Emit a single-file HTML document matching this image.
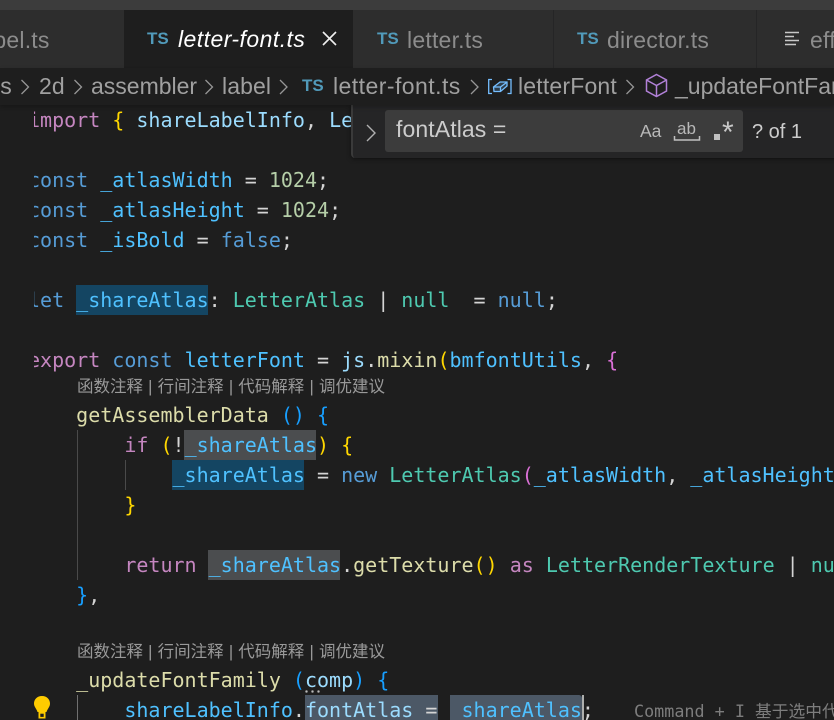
<!DOCTYPE html>
<html><head><meta charset="utf-8">
<style>
html,body{margin:0;padding:0;background:#1e1e1e;width:834px;height:720px;overflow:hidden}
body{position:relative;font-family:"Liberation Sans","Noto Sans CJK SC",sans-serif}
.a{position:absolute;white-space:pre}
.t{font-size:23px;line-height:30px;color:#8c8c8c;letter-spacing:.22px}
.ts{font-size:17px;font-weight:bold;color:#519aba;line-height:20px;position:absolute;white-space:pre}
.b{font-size:23px;line-height:30px;color:#a0a0a0;position:absolute;white-space:pre;top:71px;letter-spacing:.1px}
#code{position:absolute;left:34px;top:105px;width:800px;height:615px;overflow:hidden}
.l{position:absolute;left:-6px;height:30px;font:20px/30px "DejaVu Sans Mono",monospace;letter-spacing:0;white-space:pre;color:#d4d4d4}
.h{position:absolute;height:30px}
.g{position:absolute;width:1px;background:#4a4a4a}
.k{color:#c586c0}.c{color:#569cd6}.v{color:#4fc1ff}.p{color:#9cdcfe}.n{color:#b5cea8}.y{color:#4ec9b0}.f{color:#dcdcaa}.o{color:#ffd700}.m{color:#da70d6}.u{color:#179fff}
.lens{position:absolute;left:77px;font-size:16.5px;word-spacing:.6px;line-height:20px;color:#999;white-space:pre;font-family:"Liberation Sans","Noto Sans CJK SC",sans-serif}
</style></head><body>
<div class="a" style="left:0;top:0;width:834px;height:10px;background:#3c3c3c"></div>
<div class="a" style="left:0;top:10px;width:834px;height:58px;background:#2d2d2d"></div>
<div class="a" style="left:124px;top:10px;width:229px;height:58px;background:#1e1e1e"></div>
<div class="a" style="left:553px;top:10px;width:1px;height:58px;background:#252526"></div>
<div class="a" style="left:756px;top:10px;width:1px;height:58px;background:#252526"></div>
<div class="a t" style="left:-25px;top:25px">label.ts</div>
<div class="ts" style="left:147px;top:29px">TS</div>
<div class="a t" style="left:178px;top:24px;color:#fff;font-style:italic;letter-spacing:.45px">letter-font.ts</div>
<svg class="a" style="left:320px;top:29px" width="20" height="20" viewBox="0 0 20 20"><path d="M3 3L16 16M16 3L3 16" stroke="#f0f0f0" stroke-width="1.6" fill="none"/></svg>
<div class="ts" style="left:377px;top:29px">TS</div>
<div class="a t" style="left:407px;top:25px">letter.ts</div>
<div class="ts" style="left:577px;top:29px">TS</div>
<div class="a t" style="left:607px;top:25px">director.ts</div>
<svg class="a" style="left:785px;top:31px" width="16" height="16" viewBox="0 0 16 16"><path d="M0 1.500H14M0 5.500H9M0 9.500H14M0 13.500H11" stroke="#c8c8c8" stroke-width="1.500" fill="none"/></svg>
<div class="a t" style="left:810px;top:25px">eff</div>

<div class="a" style="left:0;top:68px;width:834px;height:37px;background:#1e1e1e;box-shadow:0 2px 4px rgba(0,0,0,.25);z-index:3"></div>
<div style="position:absolute;left:0;top:0;z-index:4">
<div class="b" style="left:-5px">ls</div>
<div class="b" style="left:39px">2d</div>
<div class="b" style="left:91px;letter-spacing:0">assembler</div>
<div class="b" style="left:222px">label</div>
<div class="ts" style="left:302px;top:76px">TS</div>
<div class="b" style="left:333px;letter-spacing:.45px">letter-font.ts</div>
<div class="b" style="left:518px;letter-spacing:.18px">letterFont</div>
<div class="b" style="left:675px;letter-spacing:0">_updateFontFamily</div>
<svg class="a" style="left:0;top:68px" width="834" height="37" viewBox="0 0 834 37" fill="none" stroke="#969696" stroke-width="1.300"><path d="M21.500 12L28.500 19L21.500 26M74.500 12L81.500 19L74.500 26M205.500 12L212.500 19L205.500 26M280 12L287 19L280 26M471 12L478 19L471 26M626.500 12L633.500 19L626.500 26"/>
<g stroke="#75beff" stroke-width="1.300"><path d="M492 11.500H488.700V25.500H492M507.500 11.500H511V25.500H507.500"/><path d="M493.500 19L500 14H507V18L500.500 23.500H494Z" fill="#75beff" fill-opacity=".2"/><path d="M494 19H500.500L506.500 14.500M500.500 19V23"/></g>
<g stroke="#b180d7" stroke-width="1.500"><path d="M656.500 6.500L666.500 12V23L656.500 28.500L646.500 23V12Z"/><path d="M646.500 12L656.500 17.500L666.500 12M656.500 17.500V28.500"/></g></svg>
</div>

<div id="code">
<div class="l" style="top:0px"><span class="k">import</span> <span class="o">{</span> <span class="p">shareLabelInfo</span>, <span class="p">LetterInfo</span></div>
<div class="l" style="top:60px"><span class="c">const</span> <span class="v">_atlasWidth</span> = <span class="n">1024</span>;</div>
<div class="l" style="top:90px"><span class="c">const</span> <span class="v">_atlasHeight</span> = <span class="n">1024</span>;</div>
<div class="l" style="top:120px"><span class="c">const</span> <span class="v">_isBold</span> = <span class="c">false</span>;</div>
<div class="h" style="left:42px;top:180px;width:132px;background:#144562"></div>
<div class="l" style="top:180px"><span class="c">let</span> <span class="v">_shareAtlas</span>: <span class="y">LetterAtlas</span> | <span class="y">null</span>  = <span class="c">null</span>;</div>
<div class="l" style="top:240px"><span class="k">export</span> <span class="c">const</span> <span class="v">letterFont</span> = <span class="p">js</span>.<span class="f">mixin</span><span class="o">(</span><span class="v">bmfontUtils</span>, <span class="m">{</span></div>
<div class="g" style="left:43px;top:325px;height:150px"></div>
<div class="g" style="left:91px;top:355px;height:30px"></div>
<div class="h" style="left:150px;top:325px;width:132px;background:#4b4d4f"></div>
<div class="h" style="left:138px;top:355px;width:132px;background:#144562"></div>
<div class="h" style="left:174px;top:445px;width:132px;background:#4b4d4f"></div>
<div class="l" style="top:295px">    <span class="f">getAssemblerData</span> <span class="u">()</span> <span class="u">{</span></div>
<div class="l" style="top:325px">        <span class="k">if</span> <span class="o">(</span>!<span class="v">_shareAtlas</span><span class="o">)</span> <span class="o">{</span></div>
<div class="l" style="top:355px">            <span class="v">_shareAtlas</span> = <span class="c">new</span> <span class="y">LetterAtlas</span><span class="m">(</span><span class="v">_atlasWidth</span>, <span class="v">_atlasHeight</span><span class="m">)</span>;</div>
<div class="l" style="top:385px">        <span class="o">}</span></div>
<div class="l" style="top:445px">        <span class="k">return</span> <span class="v">_shareAtlas</span>.<span class="f">getTexture</span><span class="o">()</span> <span class="k">as</span> <span class="y">LetterRenderTexture</span> | <span class="y">null</span>;</div>
<div class="l" style="top:475px">    <span class="u">}</span>,</div>
<div class="l" style="top:560px">    <span class="f">_updateFontFamily</span> <span class="u">(</span><span class="p">comp</span><span class="u">)</span> <span class="u">{</span></div>
<div class="g" style="left:43px;top:590px;height:30px;background:#707070"></div>
<div class="h" style="left:271px;top:590px;width:133px;background:#4c5866"></div>
<div class="h" style="left:416px;top:590px;width:132px;background:#4c5866;border-radius:0 3px 0 0"></div>
<div class="l" style="top:590px">        <span class="v">shareLabelInfo</span>.<span class="p">fontAtlas</span> = <span class="v">_shareAtlas</span>;</div>
<div class="a" style="left:548px;top:590px;width:2px;height:30px;background:#aeafad"></div>
<div class="a" style="left:600px;top:591px;font:16.75px/30px 'DejaVu Sans Mono','Noto Sans CJK SC',monospace;color:#7d7d7d">Command + I 基于选中代码生成</div>
<div class="a" style="left:271px;top:585px;width:18px;height:3px;background:radial-gradient(circle at 1.500px 1.500px,#bbb 1.200px,transparent 1.300px) 0 0/6px 3px"></div>
</div>
<div class="lens" style="top:377px">函数注释 | 行间注释 | 代码解释 | 调优建议</div>
<div class="lens" style="top:642px">函数注释 | 行间注释 | 代码解释 | 调优建议</div>
<svg class="a" style="left:32px;top:695px" width="20" height="25" viewBox="0 0 20 25"><path d="M10 1C4.800 1 2 4.800 2 8.500C2 12 4.500 13.500 5.500 17H14.500C15.500 13.500 18 12 18 8.500C18 4.800 15.200 1 10 1Z" fill="#ffcc00"/><path d="M6.500 17H13.500V23.500H6.500Z" fill="#ffcc00"/><rect x="8.300" y="18.700" width="3.400" height="3.200" fill="#1e1e1e"/></svg>

<div class="a" style="left:351px;top:105px;width:490px;height:53px;background:#252526;border-radius:0 0 0 4px;border-left:2px solid #3a3a3a;box-sizing:border-box;box-shadow:0 1px 5px rgba(0,0,0,.5);z-index:2"></div>
<div style="position:absolute;left:0;top:0;z-index:2">
<svg class="a" style="left:366px;top:124px" width="10" height="18" viewBox="0 0 10 18"><path d="M1 1L9 9L1 17" stroke="#b0b0b0" stroke-width="1.400" fill="none"/></svg>
<div class="a" style="left:385px;top:110px;width:358px;height:42px;background:#3c3c3c;border-radius:3px"></div>
<div class="a" style="left:396px;top:114px;font-size:23px;letter-spacing:.1px;line-height:30px;color:#ccc">fontAtlas =</div>
<div class="a" style="left:640px;top:121px;font-size:17.5px;line-height:20px;color:#b8b8b8">Aa</div>
<div class="a" style="left:677px;top:119px;font-size:17px;line-height:20px;color:#b8b8b8">ab</div>
<svg class="a" style="left:672px;top:134px" width="30" height="9" viewBox="0 0 30 9"><path d="M2.500 2V6H27.500V2" stroke="#c0c0c0" stroke-width="1.500" fill="none"/></svg>
<div class="a" style="left:714px;top:134px;width:6px;height:6px;background:#c0c0c0"></div>
<div class="a" style="left:722px;top:118px;font-size:30px;line-height:30px;color:#c8c8c8">*</div>
<div class="a" style="left:752px;top:117px;font-size:20px;line-height:30px;color:#ccc">? of 1</div>
</div>
</body></html>
